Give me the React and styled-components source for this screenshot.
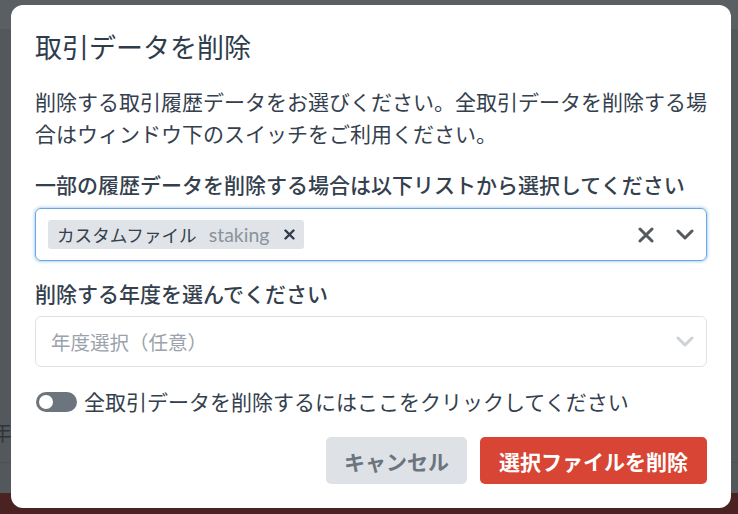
import React from 'react';
import styled, { createGlobalStyle } from 'styled-components';

const GlobalStyle = createGlobalStyle`
  html, body {
    margin: 0;
    padding: 0;
    height: 100%;
    overflow: hidden;
  }
  body {
    font-family: "Lato", "Noto Sans CJK JP", sans-serif;
  }
`;

// 背景のページ（オーバーレイ越しに見える部分）
const Page = styled.div`
  width: 738px;
  height: 514px;
  display: flex;
  flex-direction: column;
  background: #53585d;
`;

const PageHeader = styled.div`
  height: 29px;
  background: #5a5f63;
`;

const PageBody = styled.div`
  flex: 1;
  display: flex;
  flex-direction: column;
  justify-content: flex-end;
`;

const PageRow = styled.div`
  height: 46px;
  box-sizing: border-box;
  padding-top: 2px;
  line-height: 26px;
  border-bottom: 1px solid #4c5156;
  margin-bottom: 30px;
  margin-left: -9px;
  font-size: 21px;
  color: #2f3438;
`;

const PageFooter = styled.div`
  height: 21px;
  background: #4a2221;
`;

const Overlay = styled.div`
  position: fixed;
  inset: 0;
  padding: 5px 0 0 11px;
`;

const Modal = styled.div`
  width: 720px;
  height: 503px;
  box-sizing: border-box;
  background: #fff;
  border-radius: 12px;
  padding: 27px 24px 24px;
  display: flex;
  flex-direction: column;
  color: #34404d;
`;

const Title = styled.h2`
  margin: 0;
  font-size: 27px;
  line-height: 32px;
  font-weight: 400;
  color: #2e3c4c;
`;

const Text = styled.p`
  margin: 22px 0 0;
  font-size: 21px;
  line-height: 32px;
  color: #34404d;
`;

const Label = styled.div`
  margin-top: ${({ $gap }) => $gap}px;
  font-size: 21px;
  line-height: 30px;
  font-weight: 500;
  color: #34404d;
`;

const SelectBox = styled.div`
  margin-top: ${({ $mt }) => $mt}px;
  height: ${({ $h }) => $h}px;
  box-sizing: border-box;
  border: 1px solid ${({ $focused }) => ($focused ? '#6aa7e2' : '#dee2e6')};
  box-shadow: ${({ $focused }) => ($focused ? '0 0 3px 1px rgba(90, 160, 230, 0.45)' : 'none')};
  border-radius: 6px;
  display: flex;
  align-items: center;
  padding: 0 12px;
`;

const SelectValue = styled.div`
  flex: 1;
  display: flex;
  align-items: center;
`;

const Placeholder = styled.span`
  font-size: 19.5px;
  color: #9aa3ab;
  padding-left: 3px;
`;

const Chip = styled.div`
  display: flex;
  align-items: center;
  height: 29px;
  padding: 0 9px;
  background: #e0e4e8;
  border-radius: 3px;
  font-size: 17.6px;
  color: #34404d;
`;

const ChipSub = styled.span`
  font-size: 19.5px;
  color: #8a939b;
  margin-left: 12px;
`;

const ChipRemove = styled.span`
  margin-left: 15px;
  display: flex;
  align-items: center;
`;

const Indicators = styled.div`
  display: flex;
  align-items: center;
  gap: 22px;
`;

const ToggleRow = styled.label`
  margin-top: 20px;
  display: flex;
  align-items: center;
  gap: 7px;
  font-size: 21px;
  line-height: 30px;
  color: #34404d;
`;

const Switch = styled.span`
  position: relative;
  width: 41px;
  height: 20px;
  margin-left: 1px;
  border-radius: 10px;
  background: #6c757d;
  flex-shrink: 0;

  &::after {
    content: '';
    position: absolute;
    top: 3px;
    left: 3px;
    width: 14px;
    height: 14px;
    border-radius: 50%;
    background: #fff;
  }
`;

const Footer = styled.div`
  margin-top: auto;
  display: flex;
  justify-content: flex-end;
  gap: 13px;
`;

const Button = styled.button`
  height: 47px;
  padding: 0 ${({ $px }) => $px}px;
  border: none;
  border-radius: 5px;
  font-family: inherit;
  font-size: 21px;
  font-weight: 700;
  background: ${({ $variant }) => ($variant === 'danger' ? '#d84535' : '#dee2e6')};
  color: ${({ $variant }) => ($variant === 'danger' ? '#fff' : '#6c757d')};
  cursor: pointer;
`;

const SmallX = () => (
  <svg width="11" height="11" viewBox="0 0 11 11">
    <path d="M1.5 1.5 L9.5 9.5 M9.5 1.5 L1.5 9.5" stroke="#2e3c4c" strokeWidth="2.4" strokeLinecap="round" />
  </svg>
);

const ClearX = () => (
  <svg width="16" height="16" viewBox="0 0 16 16">
    <path d="M2 2 L14 14 M14 2 L2 14" stroke="#555a5f" strokeWidth="3" strokeLinecap="round" />
  </svg>
);

const Chevron = ({ color }) => (
  <svg width="18" height="11" viewBox="0 0 18 11">
    <path d="M2 2 L9 9 L16 2" fill="none" stroke={color} strokeWidth="3" strokeLinecap="round" strokeLinejoin="round" />
  </svg>
);

const App = () => (
  <>
    <GlobalStyle />
    <Page>
      <PageHeader />
      <PageBody>
        <PageRow>年</PageRow>
      </PageBody>
      <PageFooter />
    </Page>
    <Overlay>
      <Modal>
        <Title>取引データを削除</Title>
        <Text>
          削除する取引履歴データをお選びください。全取引データを削除する場合はウィンドウ下のスイッチをご利用ください。
        </Text>
        <Label $gap={20}>一部の履歴データを削除する場合は以下リストから選択してください</Label>
        <SelectBox $focused $h={53} $mt={8}>
          <SelectValue>
            <Chip>
              カスタムファイル
              <ChipSub>staking</ChipSub>
              <ChipRemove>
                <SmallX />
              </ChipRemove>
            </Chip>
          </SelectValue>
          <Indicators>
            <ClearX />
            <Chevron color="#555a5f" />
          </Indicators>
        </SelectBox>
        <Label $gap={18}>削除する年度を選んでください</Label>
        <SelectBox $h={51} $mt={7}>
          <SelectValue>
            <Placeholder>年度選択（任意）</Placeholder>
          </SelectValue>
          <Indicators>
            <Chevron color="#cdd2d6" />
          </Indicators>
        </SelectBox>
        <ToggleRow>
          <Switch />
          全取引データを削除するにはここをクリックしてください
        </ToggleRow>
        <Footer>
          <Button $px={18}>キャンセル</Button>
          <Button $variant="danger" $px={19}>選択ファイルを削除</Button>
        </Footer>
      </Modal>
    </Overlay>
  </>
);

export default App;
